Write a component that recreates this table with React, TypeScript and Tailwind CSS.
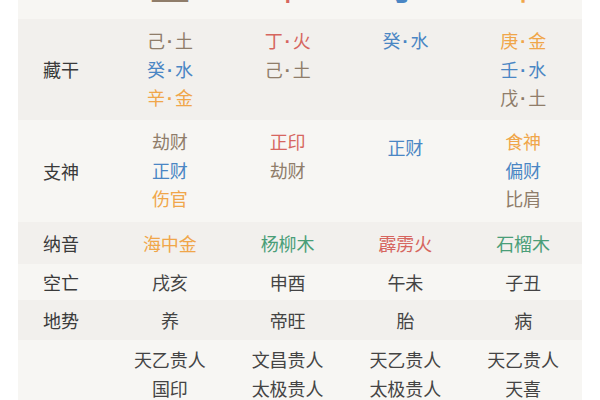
import React from "react";

const C = {
  earth: "text-[#8f7d6a]",
  water: "text-[#4a86c4]",
  metal: "text-[#f0a64a]",
  fire: "text-[#d6665f]",
  wood: "text-[#4a9e78]",
  dark: "text-[#444444]",
};

type Item = { t: string; c: string; extra?: string };

function Txt({ t }: { t: string }) {
  if (!t.includes("·")) return <>{t}</>;
  const [a, b] = t.split("·");
  return (
    <>
      {a}
      <span className="mx-[2px] leading-none font-['Liberation_Sans',sans-serif] font-bold">·</span>
      {b}
    </>
  );
}

function Cell({ items, className = "" }: { items: Item[]; className?: string }) {
  return (
    <div className={`flex flex-col items-center ${className}`}>
      {items.map((it, i) => (
        <div key={i} className={`h-[28.5px] ${it.c} ${it.extra ?? ""}`}>
          <Txt t={it.t} />
        </div>
      ))}
    </div>
  );
}

function Row({
  label,
  cells,
  bg,
  h,
  pt,
  center,
}: {
  label: string;
  cells: Item[][];
  bg: string;
  h: string;
  pt?: string;
  center?: boolean;
}) {
  return (
    <div className={`grid grid-cols-[93px_repeat(4,1fr)] ${bg} ${h} ${center ? "items-center" : "items-start"}`}>
      <div className={`pl-[25px] text-[#3a3a3a] ${center ? "" : "self-center"}`}>{label}</div>
      {cells.map((items, i) => (
        <Cell key={i} items={items} className={center ? "" : pt} />
      ))}
    </div>
  );
}

export default function App() {
  const font = { fontFamily: '"Noto Sans CJK SC", "Noto Sans", sans-serif' };
  return (
    <div className="w-[600px] h-[400px] bg-white overflow-hidden" style={font}>
      <div className="ml-[18px] w-[564px] text-[18px] leading-[28.5px]">
        {/* partial top row (地支 big characters cut off) */}
        <div className="grid grid-cols-[93px_repeat(4,1fr)] h-[19px] overflow-hidden bg-[#f7f6f3]">
          <div />
          {[
            { t: "丑", c: C.earth },
            { t: "午", c: C.fire },
            { t: "子", c: C.water },
            { t: "申", c: C.metal },
          ].map((g, i) => (
            <div key={i} className={`flex justify-center text-[40px] leading-[40px] mt-[-38px] ${g.c}`}>
              {g.t}
            </div>
          ))}
        </div>

        <Row
          label="藏干"
          bg="bg-[#f2f0ed]"
          h="h-[101px]"
          pt="pt-[7px]"
          cells={[
            [
              { t: "己·土", c: C.earth },
              { t: "癸·水", c: C.water },
              { t: "辛·金", c: C.metal },
            ],
            [
              { t: "丁·火", c: C.fire },
              { t: "己·土", c: C.earth },
            ],
            [{ t: "癸·水", c: C.water }],
            [
              { t: "庚·金", c: C.metal },
              { t: "壬·水", c: C.water },
              { t: "戊·土", c: C.earth },
            ],
          ]}
        />

        <Row
          label="支神"
          bg="bg-[#f7f6f3]"
          h="h-[102px]"
          pt="pt-[7px]"
          cells={[
            [
              { t: "劫财", c: C.earth },
              { t: "正财", c: C.water },
              { t: "伤官", c: C.metal },
            ],
            [
              { t: "正印", c: C.fire },
              { t: "劫财", c: C.earth },
            ],
            [{ t: "正财", c: C.water, extra: "mt-[6px]" }],
            [
              { t: "食神", c: C.metal },
              { t: "偏财", c: C.water },
              { t: "比肩", c: C.earth },
            ],
          ]}
        />

        <Row
          label="纳音"
          bg="bg-[#f2f0ed]"
          h="h-[42px]"
          center
          cells={[
            [{ t: "海中金", c: C.metal }],
            [{ t: "杨柳木", c: C.wood }],
            [{ t: "霹雳火", c: C.fire }],
            [{ t: "石榴木", c: C.wood }],
          ]}
        />

        <Row
          label="空亡"
          bg="bg-[#f7f6f3]"
          h="h-[36px]"
          center
          cells={[
            [{ t: "戌亥", c: C.dark }],
            [{ t: "申酉", c: C.dark }],
            [{ t: "午未", c: C.dark }],
            [{ t: "子丑", c: C.dark }],
          ]}
        />

        <Row
          label="地势"
          bg="bg-[#f2f0ed]"
          h="h-[40px]"
          center
          cells={[
            [{ t: "养", c: C.dark }],
            [{ t: "帝旺", c: C.dark }],
            [{ t: "胎", c: C.dark }],
            [{ t: "病", c: C.dark }],
          ]}
        />

        <div className="grid grid-cols-[93px_repeat(4,1fr)] bg-[#f7f6f3] h-[80px] items-start">
          <div />
          {[
            ["天乙贵人", "国印"],
            ["文昌贵人", "太极贵人"],
            ["天乙贵人", "太极贵人"],
            ["天乙贵人", "天喜"],
          ].map((col, i) => (
            <Cell key={i} className="pt-[5px]" items={col.map((t) => ({ t, c: C.dark }))} />
          ))}
        </div>
      </div>
    </div>
  );
}
